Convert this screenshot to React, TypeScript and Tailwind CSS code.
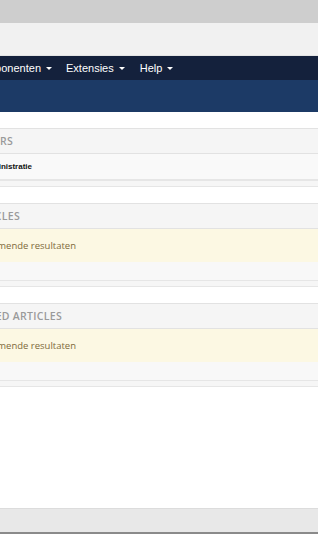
import { ReactNode } from 'react';

// Page is scrolled sideways in the reference: texts are pinned by where they end.
const EndAt = ({ x, className = '', children }: { x: string; className?: string; children: ReactNode }) => (
    <div className={`flex shrink-0 justify-end whitespace-nowrap ${x} ${className}`}>{children}</div>
);

const Caret = () => (
    <span className="ml-[5px] inline-block h-0 w-0 border-x-[3px] border-t-[3px] border-x-transparent border-t-white" />
);

const PanelHeader = ({ title, end }: { title: string; end: string }) => (
    <div className="flex h-[26px] items-center overflow-hidden border-y border-[#e2e2e2] bg-[#f5f5f5]">
        <EndAt x={end} className="text-[10.5px] font-semibold uppercase leading-[14px] tracking-[0.3px] text-[#9a9a9a]">
            {title}
        </EndAt>
    </div>
);

const Panel = ({ title, end, children }: { title: string; end: string; children: ReactNode }) => (
    <section className="bg-white">
        <PanelHeader title={title} end={end} />
        {children}
        <div className="h-[7px] border-y border-[#e6e6e6] bg-[#f6f6f6]" />
    </section>
);

const NoResults = () => (
    <>
        <div className="flex h-[33px] items-center overflow-hidden bg-[#fcf8e3]">
            <EndAt x="w-[76px]" className="text-[9.5px] leading-[14px] text-[#7e6a3a]">
                Geen overeenkomende resultaten
            </EndAt>
        </div>
        <div className="h-[18px] bg-[#f8f8f8]" />
    </>
);

export default function App() {
    return (
        <div className="flex h-[534px] w-[318px] flex-col overflow-hidden bg-white font-['Open_Sans',sans-serif]">
            {/* browser chrome */}
            <div className="h-[23px] bg-[#cecece]" />
            <div className="h-[33px] border-b border-[#e4e4e4] bg-[#f1f1f1]" />

            {/* main navigation */}
            <nav className="flex h-[24px] items-center overflow-hidden bg-[#14213c] font-['Liberation_Sans',sans-serif] text-[11px] text-white">
                <EndAt x="w-[52px]" className="items-center">
                    Componenten
                    <Caret />
                </EndAt>
                <span className="ml-[14px] flex items-center">
                    Extensies
                    <Caret />
                </span>
                <span className="ml-[15px] flex items-center">
                    Help
                    <Caret />
                </span>
            </nav>
            <div className="h-[32px] bg-[#1c3a66]" />

            <div className="flex flex-col gap-[16px] pt-[16px]">
                <Panel title="Logged-in Users" end="w-[13px]">
                    <div className="flex h-[26px] items-center overflow-hidden border-b border-[#e6e6e6] bg-[#f9f9f9]">
                        <EndAt x="w-[32px]" className="font-['Liberation_Sans',sans-serif] text-[8px] font-bold leading-[12px] text-[#111]">
                            Administratie
                        </EndAt>
                    </div>
                </Panel>

                <Panel title="Popular Articles" end="w-[20px]">
                    <NoResults />
                </Panel>

                <Panel title="Recently Added Articles" end="w-[62px]">
                    <NoResults />
                </Panel>
            </div>

            <div className="flex-1" />

            {/* status bar */}
            <div className="h-[24px] border-t border-[#dcdcdc] bg-[#e8e8e8]" />
            <div className="h-[2px] bg-[#8a8a8a]" />
        </div>
    );
}
